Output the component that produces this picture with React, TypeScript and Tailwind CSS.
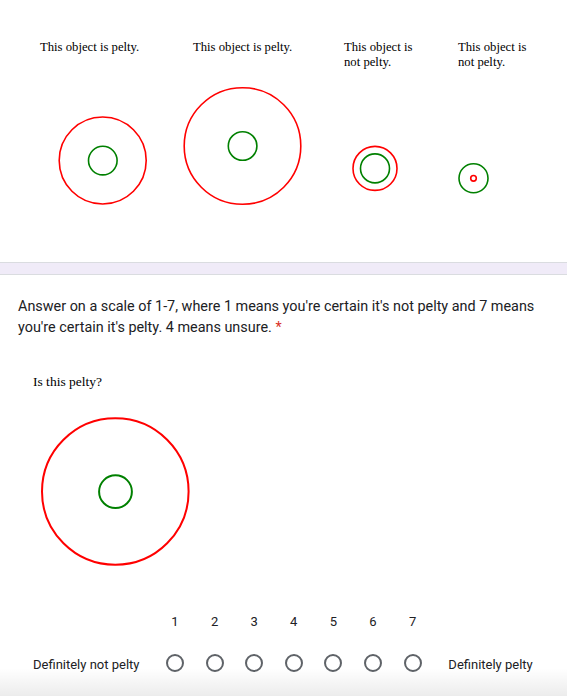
import React from "react";

const serif = { fontFamily: '"Liberation Serif", "Times New Roman", serif' };

function TopDrawing() {
  return (
    <svg width="567" height="182" viewBox="0 0 567 182" className="block">
      <g fill="none" strokeWidth="1.6">
        <circle cx="102.7" cy="80.5" r="43.5" stroke="#ff0000" />
        <circle cx="102.8" cy="80.6" r="14.3" stroke="#008000" />
        <circle cx="242.5" cy="66" r="58.3" stroke="#ff0000" />
        <circle cx="242.6" cy="66" r="14.3" stroke="#008000" />
        <circle cx="375" cy="88.4" r="22" stroke="#ff0000" />
        <circle cx="375" cy="88.4" r="14.5" stroke="#008000" />
        <circle cx="473.5" cy="98.3" r="14.5" stroke="#008000" />
        <circle cx="473.5" cy="98.3" r="2.8" stroke="#ff0000" />
      </g>
    </svg>
  );
}

function Radio() {
  return <div className="w-[18px] h-[18px] rounded-full border-2 border-[#5f6368] box-border" />;
}

export default function App() {
  const nums = [1, 2, 3, 4, 5, 6, 7];
  return (
    <div className="relative w-[567px] h-[696px] overflow-hidden bg-white">
      {/* top card */}
      <div className="h-[262px] bg-white">
        <div
          className="h-[80px] pt-[40px] flex text-[12.7px] leading-[15px] text-black"
          style={serif}
        >
          <div className="pl-[40px] w-[193px]">This object is pelty.</div>
          <div className="w-[151px]">This object is pelty.</div>
          <div className="w-[114px]">
            <div className="w-[80px]">This object is not pelty.</div>
          </div>
          <div>
            <div className="w-[80px]">This object is not pelty.</div>
          </div>
        </div>
        <TopDrawing />
      </div>

      {/* separator */}
      <div className="h-[13px] bg-[#f0ebf8] border-y border-[#dadce0]" />

      {/* bottom card */}
      <div className="px-[18px] pt-[21px]">
        <p
          className="text-[14.4px] leading-[21px] text-[#202124]"
          style={{ fontFamily: 'Roboto, "Liberation Sans", Arial, sans-serif' }}
        >
          Answer on a scale of 1-7, where 1 means you're certain it's not pelty and 7 means you're certain it's
          pelty. 4 means unsure. <span className="text-[#d93025]">*</span>
        </p>
        <div className="mt-[36px] pl-[15px] text-[13.5px] leading-[16px] text-black" style={serif}>
          Is this pelty?
        </div>
        <svg width="200" height="200" viewBox="0 0 200 200" className="block">
          <circle cx="97.3" cy="101.5" r="73.3" fill="none" stroke="#ff0000" strokeWidth="2" />
          <circle cx="97.5" cy="101.7" r="16.4" fill="none" stroke="#008000" strokeWidth="2" />
        </svg>
      </div>

      <div
        className="text-[13px] text-[#202124]"
        style={{ fontFamily: 'Roboto, "Liberation Sans", Arial, sans-serif' }}
      >
        <div className="mt-[21.7px] flex pl-[155.2px] leading-[20px]">
          {nums.map((n) => (
            <div key={n} className="w-[39.6px] text-center">
              {n}
            </div>
          ))}
        </div>
        <div className="mt-[19.8px] flex items-center h-[24px] pl-[33px]">
          <div className="w-[122.2px] pt-[3px]">Definitely not pelty</div>
          {nums.map((n) => (
            <div key={n} className="w-[39.6px] flex justify-center">
              <Radio />
            </div>
          ))}
          <div className="pl-[16px] pt-[3px]">Definitely pelty</div>
        </div>
      </div>

      <div className="pointer-events-none absolute bottom-0 left-0 right-0 h-[28px] bg-linear-to-b from-transparent to-black/[0.075]" />
    </div>
  );
}
